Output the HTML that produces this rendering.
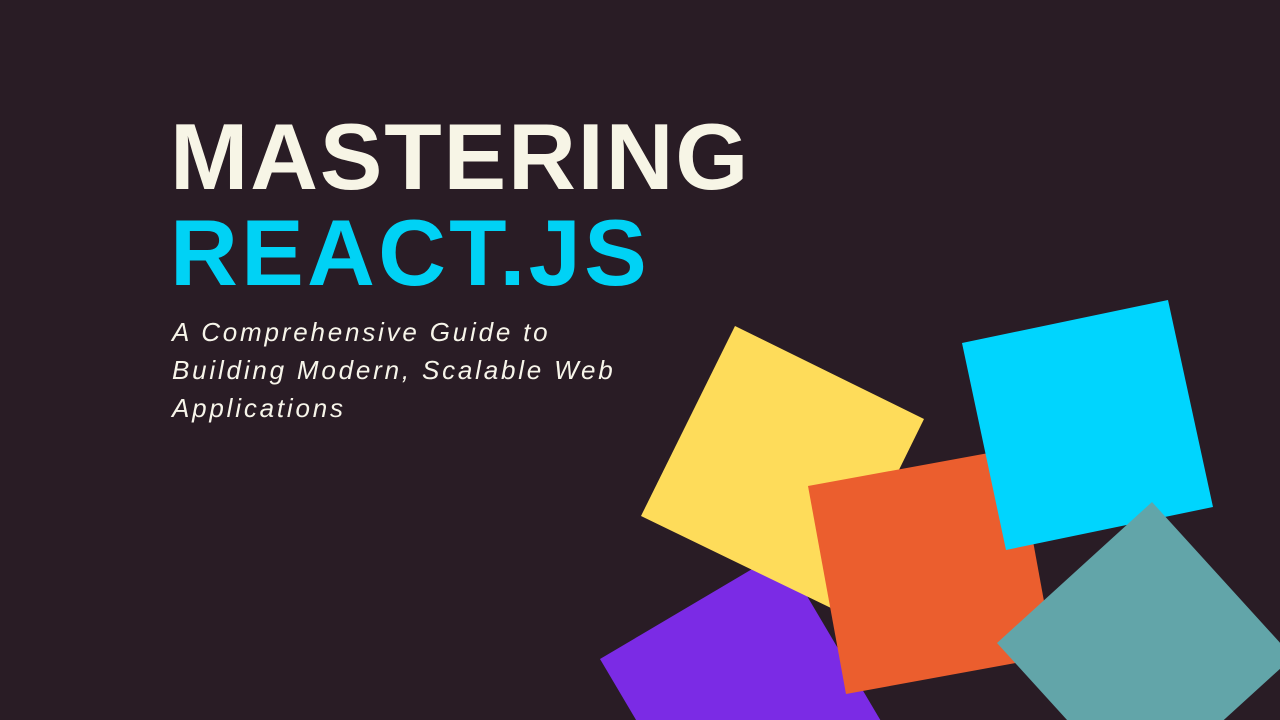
<!DOCTYPE html>
<html><head><meta charset="utf-8"><style>
html,body{margin:0;padding:0;overflow:hidden}
body{width:1280px;height:720px;background:#291c25;position:relative;overflow:hidden;font-family:"Liberation Sans",sans-serif}
.t{position:absolute;left:170px;font-weight:bold;font-size:94px;line-height:1;margin:0;letter-spacing:1.8px}
.sub{position:absolute;left:172px;top:313px;font-style:italic;font-size:26px;line-height:38px;letter-spacing:2.8px;color:#f7f5ea;white-space:nowrap}
svg{position:absolute;left:0;top:0}
</style></head><body>
<svg width="1280" height="720" viewBox="0 0 1280 720">
<polygon points="600,659 781,552 888,733 707,840" fill="#7b2be5"/>
<polygon points="735,326 924,419 831,608 641,516" fill="#fedc5a"/>
<polygon points="808,486 1016,448 1054,656 846,694" fill="#eb5e2e"/>
<polygon points="962,343 1168,300 1213,507 1006,550" fill="#00d5fe"/>
<polygon points="1152,502 1293,657 1138,798 997,643" fill="#62a5a9"/>
</svg>
<div class="t" style="top:110px;color:#f7f5e6">MASTERING</div>
<div class="t" style="top:206px;color:#00d2f5;letter-spacing:3.2px">REACT.JS</div>
<div class="sub">A Comprehensive Guide to<br>Building Modern, Scalable Web<br>Applications</div>
</body></html>
